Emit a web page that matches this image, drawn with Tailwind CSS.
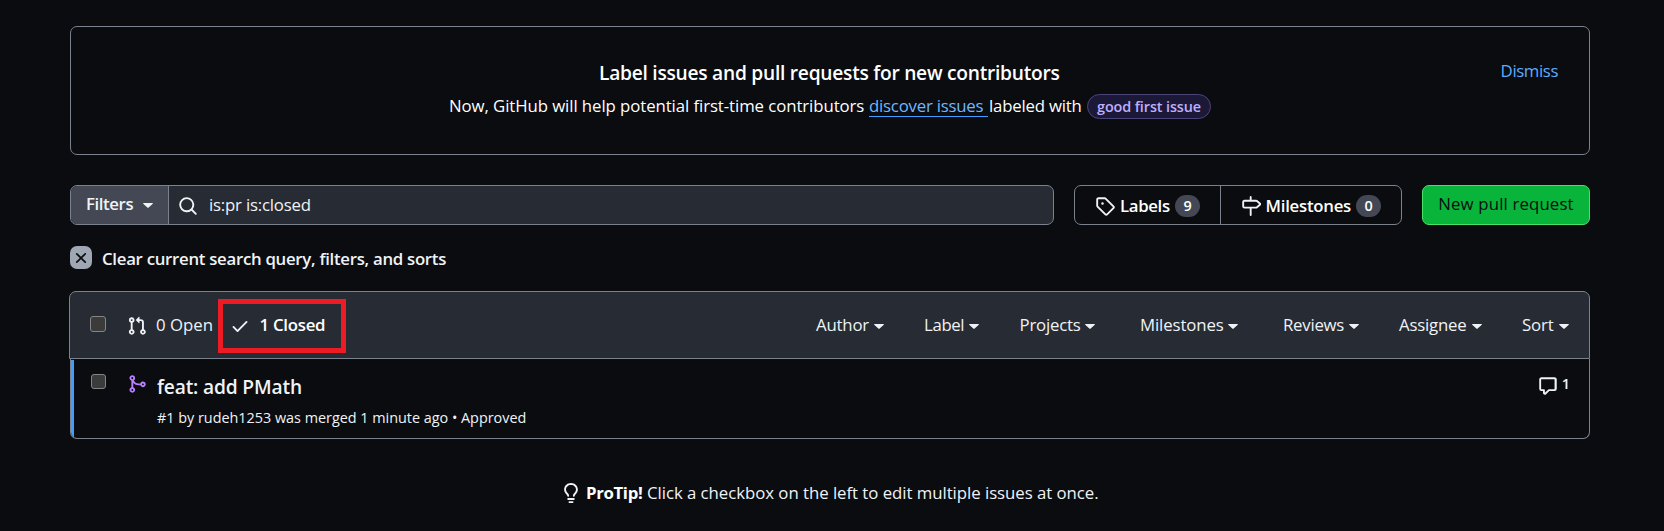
<!DOCTYPE html>
<html lang="en">
<head>
<meta charset="utf-8">
<title>Pull requests</title>
<script src="https://cdn.jsdelivr.net/npm/@tailwindcss/browser@4"></script>
</head>
<body class="h-[531px] overflow-hidden bg-[#0a0c10] font-['Open_Sans','Noto_Sans',sans-serif] text-[16.8px] leading-[30px] text-[#f0f3f6] whitespace-nowrap">
<main class="ml-[70px] w-[1520px] pt-[26px]">

  <!-- Banner -->
  <section class="flex h-[129px] rounded-[7px] border border-[#7a828e]">
    <div class="w-[100px]"></div>
    <div class="flex flex-1 flex-col items-center pt-[31px]">
      <h2 class="w-[462px] text-[19.2px] font-semibold tracking-[-0.26px] text-white">Label issues and pull requests for new contributors</h2>
      <p class="mt-[3px] flex w-[762px] items-start text-white">
        <span class="w-[420px] tracking-[-0.08px]">Now, GitHub will help potential first-time contributors</span>
        <a class="mr-px h-[26px] w-[119px] border-b border-[#409eff] tracking-[-0.22px] text-[#71b7ff]">discover issues</a>
        <span class="w-[98px] tracking-[-0.2px]">labeled with</span>
        <span class="mt-[3px] flex h-[25px] w-[124px] items-center justify-center rounded-full border border-[#4c4378] bg-[#1c1938] text-[14.4px] font-semibold tracking-[-0.1px] text-[#bfaeff]">good first issue</span>
      </p>
    </div>
    <a class="w-[100px] pt-[29px] pr-[31px] text-right tracking-[-0.4px] text-[#5cacff]">Dismiss</a>
  </section>

  <!-- Search and actions -->
  <section class="mt-[30px] flex h-10">
    <div class="flex w-[984px] overflow-hidden rounded-[7px] border border-[#7a828e] bg-[#272b33]">
      <div class="flex w-[98px] items-center border-r border-[#7a828e] bg-[#434854] pl-[15px] font-semibold">
        <span class="mb-[3px] w-[57px] tracking-[-0.4px]">Filters</span>
        <svg class="mt-px h-[5px] w-[10px] fill-current" viewBox="0 0 10 5"><path d="M.6 0h8.8c.5 0 .7.5.4.8L5.4 4.8c-.2.2-.6.2-.8 0L.2.8C-.1.5.1 0 .6 0Z"/></svg>
      </div>
      <svg class="mt-[10px] ml-[9px] size-5 fill-current" viewBox="0 0 16 16"><path d="M10.68 11.74a6 6 0 0 1-7.922-8.982 6 6 0 0 1 8.982 7.922l3.04 3.04a.749.749 0 0 1-.326 1.275.749.749 0 0 1-.734-.215ZM11.5 7a4.499 4.499 0 1 0-8.997 0A4.499 4.499 0 0 0 11.5 7Z"/></svg>
      <span class="mt-[4px] ml-[11px] tracking-[-0.2px]">is:pr is:closed</span>
    </div>
    <div class="ml-5 flex w-[328px] rounded-[7px] border border-[#7a828e] font-semibold text-white">
      <div class="flex w-[146px] border-r border-[#7a828e] pl-5">
        <svg class="mt-[10px] size-5 fill-[#f0f3f6]" viewBox="0 0 16 16"><path d="M1 7.775V2.75C1 1.784 1.784 1 2.75 1h5.025c.464 0 .91.184 1.238.513l6.25 6.25a1.75 1.75 0 0 1 0 2.474l-5.026 5.026a1.75 1.75 0 0 1-2.474 0l-6.25-6.25A1.752 1.752 0 0 1 1 7.775Zm1.5 0c0 .066.026.13.073.177l6.25 6.25a.25.25 0 0 0 .354 0l5.025-5.025a.25.25 0 0 0 0-.354l-6.25-6.25a.25.25 0 0 0-.177-.073H2.75a.25.25 0 0 0-.25.25ZM6 5a1 1 0 1 1 0 2 1 1 0 0 1 0-2Z"/></svg>
        <span class="mt-[5px] ml-[5px] w-[55px] tracking-[-0.35px]">Labels</span>
        <span class="mt-[9px] flex h-[22px] w-[25px] items-center justify-center rounded-full bg-[#434854] text-[14.4px]">9</span>
      </div>
      <div class="flex pl-5">
        <svg class="mt-[10px] size-5 fill-[#f0f3f6]" viewBox="0 0 16 16"><path d="M7.75 0a.75.75 0 0 1 .75.75V3h3.634c.414 0 .814.147 1.13.414l2.07 1.75a1.75 1.75 0 0 1 0 2.672l-2.07 1.75a1.75 1.75 0 0 1-1.13.414H8.5v5.25a.75.75 0 0 1-1.5 0V10H2.75A1.75 1.75 0 0 1 1 8.25v-3.5C1 3.784 1.784 3 2.75 3H7V.75A.75.75 0 0 1 7.75 0Zm4.384 8.5a.25.25 0 0 0 .161-.06l2.07-1.75a.248.248 0 0 0 0-.38l-2.07-1.75a.25.25 0 0 0-.161-.06H2.75a.25.25 0 0 0-.25.25v3.5c0 .138.112.25.25.25h9.384Z"/></svg>
        <span class="mt-[5px] ml-[4.5px] w-[90.5px] tracking-[-0.25px]">Milestones</span>
        <span class="mt-[9px] flex h-[22px] w-[25px] items-center justify-center rounded-full bg-[#434854] text-[14.4px]">0</span>
      </div>
    </div>
    <button class="ml-5 flex w-[168px] justify-center rounded-[7px] border border-[#4ae168] bg-[#09b43a] pt-[3px] tracking-[0.15px] text-[#0a0c10]">New pull request</button>
  </section>

  <!-- Clear filters -->
  <section class="mt-[21px] flex h-[23px] items-center font-semibold">
    <span class="flex h-[23px] w-[22px] items-center justify-center rounded-[7px] bg-[#9ea7b3]">
      <svg class="size-[18px] fill-[#0a0c10]" viewBox="0 0 16 16"><path d="M3.72 3.72a.75.75 0 0 1 1.06 0L8 6.94l3.22-3.22a.749.749 0 0 1 1.275.326.749.749 0 0 1-.215.734L9.06 8l3.22 3.22a.749.749 0 0 1-.326 1.275.749.749 0 0 1-.734-.215L8 9.06l-3.22 3.22a.751.751 0 0 1-1.042-.018.751.751 0 0 1-.018-1.042L6.94 8 3.72 4.78a.75.75 0 0 1 0-1.06Z"/></svg>
    </span>
    <span class="mt-[2px] ml-[10px] tracking-[-0.28px]">Clear current search query, filters, and sorts</span>
  </section>

  <!-- Pull request list -->
  <section class="mt-[22px]">
    <header class="-ml-px flex h-[68px] rounded-t-[7px] border border-[#7a828e] bg-[#272b33]">
      <span class="mt-[24px] ml-[20px] size-4 rounded-[3px] border border-[#858585] bg-[#3b3b3b]"></span>
      <svg class="mt-[24px] ml-[21px] size-5 fill-current" viewBox="0 0 16 16"><path d="M1.5 3.25a2.25 2.25 0 1 1 3 2.122v5.256a2.251 2.251 0 1 1-1.5 0V5.372A2.25 2.25 0 0 1 1.5 3.25Zm5.677-.177L9.573.677A.25.25 0 0 1 10 .854V2.5h1A2.5 2.5 0 0 1 13.5 5v5.628a2.251 2.251 0 1 1-1.5 0V5a1 1 0 0 0-1-1h-1v1.646a.25.25 0 0 1-.427.177L7.177 3.427a.25.25 0 0 1 0-.354ZM3.75 2.5a.75.75 0 1 0 0 1.5.75.75 0 0 0 0-1.5Zm0 9.5a.75.75 0 1 0 0 1.5.75.75 0 0 0 0-1.5Zm8.25.75a.75.75 0 1 0 1.5 0 .75.75 0 0 0-1.5 0Z"/></svg>
      <span class="mt-[18px] ml-[9px] w-[62px]">0 Open</span>
      <div class="mt-[7px] flex h-[54px] w-[128px] border-[5px] border-[#ed1c24] font-semibold text-white">
        <svg class="mt-[12px] ml-[7px] size-5 fill-[#f0f3f6]" viewBox="0 0 16 16"><path d="M13.78 4.22a.75.75 0 0 1 0 1.06l-7.25 7.25a.75.75 0 0 1-1.06 0L2.22 9.28a.751.751 0 0 1 .018-1.042.751.751 0 0 1 1.042-.018L6 10.94l6.72-6.72a.75.75 0 0 1 1.06 0Z"/></svg>
        <span class="mt-[6px] ml-[9.5px] tracking-[-0.25px]">1 Closed</span>
      </div>
      <nav class="mt-[18px] mr-[20px] ml-auto flex h-[30px] items-center">
        <span class="flex w-[68px] items-center justify-between tracking-[-0.2px]">Author<svg class="mt-[3px] h-[5px] w-[10px] fill-current" viewBox="0 0 10 5"><path d="M.6 0h8.8c.5 0 .7.5.4.8L5.4 4.8c-.2.2-.6.2-.8 0L.2.8C-.1.5.1 0 .6 0Z"/></svg></span>
        <span class="ml-[40px] flex w-[55px] items-center justify-between tracking-[-0.35px]">Label<svg class="mt-[3px] h-[5px] w-[10px] fill-current" viewBox="0 0 10 5"><path d="M.6 0h8.8c.5 0 .7.5.4.8L5.4 4.8c-.2.2-.6.2-.8 0L.2.8C-.1.5.1 0 .6 0Z"/></svg></span>
        <span class="ml-[40.5px] flex w-[75.5px] items-center justify-between tracking-[-0.2px]">Projects<svg class="mt-[3px] h-[5px] w-[10px] fill-current" viewBox="0 0 10 5"><path d="M.6 0h8.8c.5 0 .7.5.4.8L5.4 4.8c-.2.2-.6.2-.8 0L.2.8C-.1.5.1 0 .6 0Z"/></svg></span>
        <span class="ml-[45px] flex w-[98px] items-center justify-between tracking-[-0.12px]">Milestones<svg class="mt-[3px] h-[5px] w-[10px] fill-current" viewBox="0 0 10 5"><path d="M.6 0h8.8c.5 0 .7.5.4.8L5.4 4.8c-.2.2-.6.2-.8 0L.2.8C-.1.5.1 0 .6 0Z"/></svg></span>
        <span class="ml-[45px] flex w-[76px] items-center justify-between tracking-[-0.25px]">Reviews<svg class="mt-[3px] h-[5px] w-[10px] fill-current" viewBox="0 0 10 5"><path d="M.6 0h8.8c.5 0 .7.5.4.8L5.4 4.8c-.2.2-.6.2-.8 0L.2.8C-.1.5.1 0 .6 0Z"/></svg></span>
        <span class="ml-[40px] flex w-[83px] items-center justify-between tracking-[-0.2px]">Assignee<svg class="mt-[3px] h-[5px] w-[10px] fill-current" viewBox="0 0 10 5"><path d="M.6 0h8.8c.5 0 .7.5.4.8L5.4 4.8c-.2.2-.6.2-.8 0L.2.8C-.1.5.1 0 .6 0Z"/></svg></span>
        <span class="ml-[40px] flex w-[47px] items-center justify-between tracking-[-0.1px]">Sort<svg class="mt-[3px] h-[5px] w-[10px] fill-current" viewBox="0 0 10 5"><path d="M.6 0h8.8c.5 0 .7.5.4.8L5.4 4.8c-.2.2-.6.2-.8 0L.2.8C-.1.5.1 0 .6 0Z"/></svg></span>
      </nav>
    </header>
    <article class="flex h-[80px] overflow-hidden rounded-b-[7px] border border-t-0 border-[#7a828e]">
      <div class="mt-px w-[3px] rounded-bl-[6px] bg-[#409eff]"></div>
      <span class="mt-[15px] ml-[17px] size-[15px] rounded-[3px] border border-[#858585] bg-[#3b3b3b]"></span>
      <svg class="mt-[15px] ml-[21px] size-5 fill-[#b87fff]" viewBox="0 0 16 16"><path d="M5.45 5.154A4.25 4.25 0 0 0 9.25 7.5h1.378a2.251 2.251 0 1 1 0 1.5H9.25A5.734 5.734 0 0 1 5 7.123v3.505a2.25 2.25 0 1 1-1.5 0V5.372a2.25 2.25 0 1 1 1.95-.218ZM4.25 13.5a.75.75 0 1 0 0-1.5.75.75 0 0 0 0 1.5Zm8.5-4.5a.75.75 0 1 0 0-1.5.75.75 0 0 0 0 1.5ZM5 3.25a.75.75 0 1 0 0 .005V3.25Z"/></svg>
      <div class="ml-[10px]">
        <h3 class="mt-[13px] text-[19.2px] font-semibold tracking-[-0.16px]">feat: add PMath</h3>
        <p class="mt-px text-[14.4px] tracking-[-0.01px]">#1 by rudeh1253 was merged 1 minute ago • Approved</p>
      </div>
      <div class="mr-[19px] ml-auto flex">
        <svg class="mt-[17px] size-5 fill-current" viewBox="0 0 16 16"><path d="M1 2.75C1 1.784 1.784 1 2.75 1h10.5c.966 0 1.75.784 1.75 1.75v7.5A1.75 1.75 0 0 1 13.25 12H9.06l-2.573 2.573A1.458 1.458 0 0 1 4 13.543V12H2.75A1.75 1.75 0 0 1 1 10.25Zm1.75-.25a.25.25 0 0 0-.25.25v7.5c0 .138.112.25.25.25h2a.75.75 0 0 1 .75.75v2.19l2.72-2.72a.749.749 0 0 1 .53-.22h4.25a.25.25 0 0 0 .25-.25v-7.5a.25.25 0 0 0-.25-.25Z"/></svg>
        <span class="mt-[10px] ml-[4px] text-[14.4px] font-semibold">1</span>
      </div>
    </article>
  </section>

  <!-- Tip -->
  <footer class="mt-[38px] ml-[491px] flex">
    <svg class="mt-[6px] size-5 fill-current" viewBox="0 0 16 16"><path d="M8 1.5c-2.363 0-4 1.69-4 3.75 0 .984.424 1.625.984 2.304l.214.253c.223.264.47.556.673.848.284.411.537.896.621 1.49a.75.75 0 0 1-1.484.211c-.04-.282-.163-.547-.37-.847a8.456 8.456 0 0 0-.542-.68c-.084-.1-.173-.205-.268-.32C3.201 7.75 2.5 6.766 2.5 5.25 2.5 2.31 4.863 0 8 0s5.5 2.31 5.5 5.25c0 1.516-.701 2.5-1.328 3.259-.095.115-.184.22-.268.319-.207.245-.383.453-.541.681-.208.3-.33.565-.37.847a.751.751 0 0 1-1.485-.212c.084-.593.337-1.078.621-1.489.203-.292.45-.584.673-.848.075-.088.147-.173.213-.253.561-.679.985-1.32.985-2.304 0-2.06-1.637-3.75-4-3.75ZM5.75 12h4.5a.75.75 0 0 1 0 1.5h-4.5a.75.75 0 0 1 0-1.5ZM6 15.25a.75.75 0 0 1 .75-.75h2.5a.75.75 0 0 1 0 1.5h-2.5a.75.75 0 0 1-.75-.75Z"/></svg>
    <strong class="mt-px ml-[5px] w-[61px] font-bold tracking-[-0.35px] text-white">ProTip!</strong>
    <span class="mt-px tracking-[-0.04px]">Click a checkbox on the left to edit multiple issues at once.</span>
  </footer>
</main>
</body>
</html>
